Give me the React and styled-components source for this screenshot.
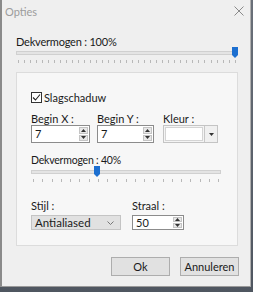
import React from "react";
import styled, { createGlobalStyle } from "styled-components";

const Global = createGlobalStyle`
  html, body { margin: 0; padding: 0; }
  body {
    width: 253px; height: 292px; overflow: hidden;
    background: #59606a;
    font-family: Lato, "Noto Sans", sans-serif;
    font-size: 11px; color: #1a1a1a;
  }
`;

const Desktop = styled.div`
  width: 253px; height: 292px;
  background: linear-gradient(#6a7079, #4f5660);
`;

const Window = styled.div`
  box-sizing: border-box;
  width: 251px; height: 287px;
  background: #efefef;
  border-left: 2px solid #8a8a8a;
  border-right: 1px solid #b0b0b0;
  border-bottom: 1px solid #9a9a9a;
  display: flex; flex-direction: column;
`;

const TitleBar = styled.div`
  height: 22px;
  display: flex; align-items: center; justify-content: space-between;
  padding: 0 6px 0 3px;
  color: #9c9c9c; font-size: 11px;
`;

const Body = styled.div`
  padding: 13px 11px 0 14px;
  display: flex; flex-direction: column;
`;

const Label = styled.div`
  font-size: ${p => p.$size || 11}px;
  letter-spacing: ${p => p.$ls || 0}px;
  line-height: 13px;
  height: 13px;
  white-space: nowrap;
`;

const SliderWrap = styled.div`
  position: relative;
  height: 17px;
  width: ${p => p.$w}px;
  margin-top: ${p => p.$mt}px;
`;

const Track = styled.div`
  position: absolute; left: 0; right: 0; top: 4px;
  height: 2px;
  background: #e4e4e4;
  border: 1px solid #d0d0d0;
`;

const Thumb = styled.svg`
  position: absolute; top: 0;
`;

const Ticks = styled.div`
  position: absolute; left: 2px; right: 2px; top: 13px;
  display: flex; justify-content: space-between;
`;

const Tick = styled.span`
  width: 1px; height: 3px; background: #b8b8b8;
`;

const Slider = ({ w, mt, value, ticks }) => {
  const x = Math.round((w - 6) * value / 100);
  return (
    <SliderWrap $w={w} $mt={mt}>
      <Track />
      <Thumb width="6" height="11" viewBox="0 0 6 11" style={{ left: x }}>
        <path d="M0 0 H6 V8 L3 11 L0 8 Z" fill="#1c6fd0" />
      </Thumb>
      <Ticks>
        {Array.from({ length: ticks }).map((_, i) => <Tick key={i} />)}
      </Ticks>
    </SliderWrap>
  );
};

const Panel = styled.div`
  box-sizing: border-box;
  margin-top: 8px;
  width: 222px; height: 174px;
  border: 1px solid #dcdcdc;
  background: #f7f7f7;
  padding: 18px 0 0 14px;
  display: flex; flex-direction: column;
`;

const CheckRow = styled.label`
  display: flex; align-items: center; gap: 2px;
  height: 13px;
  font-size: 11px;
`;

const Box = styled.span`
  box-sizing: border-box;
  width: 11px; height: 11px;
  border: 1px solid #333;
  background: #fff;
  display: flex; align-items: center; justify-content: center;
`;

const Row = styled.div`
  display: flex;
  margin-top: ${p => p.$mt}px;
`;

const Field = styled.div`
  width: ${p => p.$w}px;
  margin-right: ${p => p.$mr || 0}px;
  display: flex; flex-direction: column; gap: ${p => p.$gap || 0}px;
`;

const Spin = styled.div`
  box-sizing: border-box;
  height: ${p => p.$h || 18}px;
  display: flex;
  border: 1px solid #8c8c8c;
  background: #fff;
`;

const SpinText = styled.div`
  flex: 1; padding-left: 3px; line-height: ${p => p.$lh || 16}px; font-size: 11px;
`;

const SpinButtons = styled.div`
  width: 9px;
  display: flex; flex-direction: column; gap: 1px;
  padding: 1px 1px 1px 0;
`;

const SpinBtn = styled.div`
  flex: 1;
  background: #e8e8e8;
  border: 1px solid #c4c4c4;
  display: flex; align-items: center; justify-content: center;
`;

const ColorCombo = styled.div`
  box-sizing: border-box;
  height: 18px; width: 55px;
  display: flex;
  border: 1px solid #c4c4c4;
  background: #f4f4f4;
`;

const ColorField = styled.div`
  flex: 1;
  margin: 1px;
  background: #fff;
  border: 1px solid #d4d4d4;
`;

const ColorBtn = styled.div`
  width: 12px;
  border-left: 1px solid #c8c8c8;
  background: #f0f0f0;
  display: flex; align-items: center; justify-content: center;
`;

const Select = styled.div`
  box-sizing: border-box;
  height: 15px; width: 90px;
  background: #e1e1e1;
  border: 1px solid #c4c4c4;
  display: flex; align-items: center; justify-content: space-between;
  padding: 0 6px 0 3px;
  font-size: 11.5px;
`;

const Footer = styled.div`
  display: flex; justify-content: flex-end; gap: 10px;
  margin-top: 11px;
  width: 223px;
`;

const Button = styled.button`
  box-sizing: border-box;
  width: 59px; height: 19px;
  background: #e1e1e1;
  border: 1px solid #adadad;
  font-family: inherit; font-size: 11px; color: #1a1a1a;
  padding: 0;
`;

const Tri = ({ up }) => (
  <svg width="5" height="3" viewBox="0 0 5 3">
    <path d={up ? "M0 3 L2.5 0 L5 3 Z" : "M0 0 L5 0 L2.5 3 Z"} fill="#333" />
  </svg>
);

const SpinBox = ({ value, h, lh }) => (
  <Spin $h={h}>
    <SpinText $lh={lh}>{value}</SpinText>
    <SpinButtons>
      <SpinBtn><Tri up /></SpinBtn>
      <SpinBtn><Tri /></SpinBtn>
    </SpinButtons>
  </Spin>
);

export default function App() {
  return (
    <Desktop>
      <Global />
      <Window>
        <TitleBar>
          <span>Opties</span>
          <svg width="10" height="10" viewBox="0 0 10 10">
            <path d="M0.5 0.5 L9.5 9.5 M9.5 0.5 L0.5 9.5" stroke="#8a8a8a" strokeWidth="1" />
          </svg>
        </TitleBar>
        <Body>
          <Label $size={11} $ls={-0.2}>Dekvermogen : 100%</Label>
          <Slider w={222} mt={-1} value={100} ticks={37} />
          <Panel>
            <CheckRow>
              <Box>
                <svg width="9" height="9" viewBox="0 0 9 9">
                  <path d="M1 4.5 L3.5 7 L8 1.5" stroke="#222" strokeWidth="1.1" fill="none" />
                </svg>
              </Box>
              Slagschaduw
            </CheckRow>
            <Row $mt={8}>
              <Field $w={59} $mr={7}>
                <Label>Begin X :</Label>
                <SpinBox value="7" />
              </Field>
              <Field $w={57} $mr={9}>
                <Label>Begin Y :</Label>
                <SpinBox value="7" />
              </Field>
              <Field $w={55}>
                <Label>Kleur :</Label>
                <ColorCombo>
                  <ColorField />
                  <ColorBtn><Tri /></ColorBtn>
                </ColorCombo>
              </Field>
            </Row>
            <Row $mt={11}>
              <Field $w={191}>
                <Label $size={10.5} $ls={-0.2}>Dekvermogen : 40%</Label>
                <Slider w={190} mt={-1} value={34} ticks={21} />
              </Field>
            </Row>
            <Row $mt={16}>
              <Field $w={90} $mr={11} $gap={3}>
                <Label>Stijl :</Label>
                <Select>
                  <span>Antialiased</span>
                  <svg width="7" height="4" viewBox="0 0 7 4">
                    <path d="M0.5 0.5 L3.5 3.5 L6.5 0.5" stroke="#777" fill="none" />
                  </svg>
                </Select>
              </Field>
              <Field $w={52} $gap={3}>
                <Label>Straal :</Label>
                <SpinBox value="50" h={15} lh={13} />
              </Field>
            </Row>
          </Panel>
          <Footer>
            <Button>Ok</Button>
            <Button>Annuleren</Button>
          </Footer>
        </Body>
      </Window>
    </Desktop>
  );
}
